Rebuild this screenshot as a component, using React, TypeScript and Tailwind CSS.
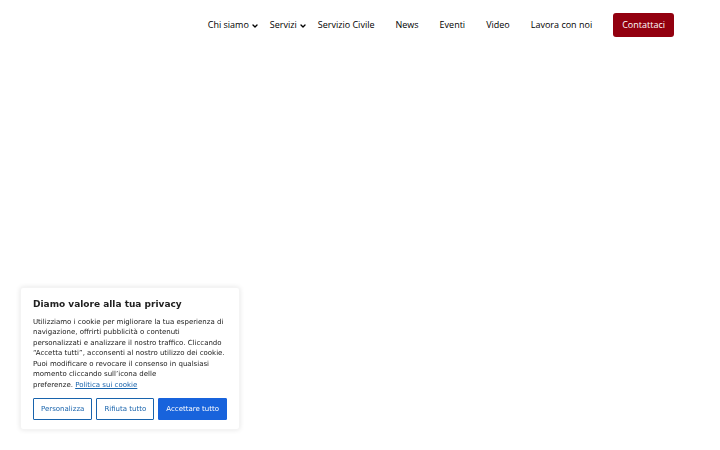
import { ChevronDown } from "lucide-react"

const navItems = [
  { label: "Chi siamo", hasMenu: true },
  { label: "Servizi", hasMenu: true },
  { label: "Servizio Civile" },
  { label: "News" },
  { label: "Eventi" },
  { label: "Video" },
  { label: "Lavora con noi" },
]

function Header() {
  return (
    <header className="flex items-center justify-end pt-[13px] pr-[46px] font-['Open_Sans',sans-serif] text-[9px] font-medium text-black">
      <nav aria-label="Principale" className="flex items-center">
        {navItems.map((item) => (
          <a
            key={item.label}
            href="#"
            className={`flex items-center whitespace-nowrap ${item.hasMenu ? "gap-0.5 mr-[11px]" : "mr-[21px]"}`}
          >
            {item.label}
            {item.hasMenu && <ChevronDown className="mt-0.5 size-2" strokeWidth={4} />}
          </a>
        ))}
      </nav>
      <a href="#" className="flex h-6 items-center rounded-[3px] bg-[#92000f] px-[9px] whitespace-nowrap text-white">
        Contattaci
      </a>
    </header>
  )
}

function CookieBanner() {
  const buttonBase = "h-[22px] rounded-[1px] border px-[7px] text-[7px] whitespace-nowrap"

  return (
    <section
      role="dialog"
      aria-labelledby="cookie-title"
      className="fixed bottom-5 left-5 w-[220px] rounded-[3px] border border-[#f4f4f4] bg-white px-3 pt-2.5 pb-[9px] font-['DejaVu_Sans',sans-serif] text-[#212121] shadow-[0_0_5px_#0000001a]"
    >
      <h2 id="cookie-title" className="text-[9px] leading-3 font-bold">
        Diamo valore alla tua privacy
      </h2>
      <p className="mt-[7px] text-[7px] leading-normal">
        Utilizziamo i cookie per migliorare la tua esperienza di navigazione, offrirti pubblicità o contenuti
        personalizzati e analizzare il nostro traffico. Cliccando “Accetta tutti”, acconsenti al nostro utilizzo dei
        cookie. Puoi modificare o revocare il consenso in qualsiasi momento cliccando sull’icona delle{" "}
        <span className="whitespace-nowrap">
          preferenze.&nbsp;
          <a href="#" className="text-[#1863ac] underline">
            Politica sui cookie
          </a>
        </span>
      </p>
      <div className="mt-2 flex justify-between">
        <button type="button" className={`${buttonBase} border-[#1863ac] text-[#1863ac]`}>
          Personalizza
        </button>
        <button type="button" className={`${buttonBase} border-[#1863ac] text-[#1863ac]`}>
          Rifiuta tutto
        </button>
        <button type="button" className={`${buttonBase} border-[#1863dc] bg-[#1863dc] text-white`}>
          Accettare tutto
        </button>
      </div>
    </section>
  )
}

export default function App() {
  return (
    <div className="min-h-screen bg-white">
      <Header />
      <CookieBanner />
    </div>
  )
}
